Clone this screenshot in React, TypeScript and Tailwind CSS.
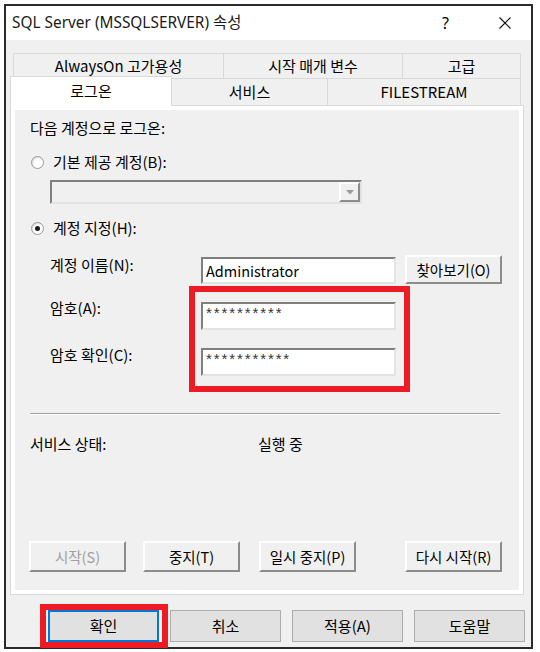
import React from "react";

const sunken =
  "border-2 border-t-[#7f7f7f] border-l-[#7f7f7f] border-r-[#e3e3e3] border-b-[#e3e3e3]";
const raised =
  "border-2 border-t-[#fdfdfd] border-l-[#fdfdfd] border-r-[#8c8c8c] border-b-[#8c8c8c] bg-[#f0f0f0]";

function Radio({ checked }: { checked?: boolean }) {
  return (
    <div className="w-[13px] h-[13px] rounded-full border border-[#9a9a9a] bg-white flex items-center justify-center shadow-[inset_1px_1px_1px_rgba(0,0,0,0.15)]">
      {checked && <div className="w-[5px] h-[5px] rounded-full bg-[#1a1a1a]" />}
    </div>
  );
}

function SvcButton({ label, disabled, className }: { label: string; disabled?: boolean; className?: string }) {
  return (
    <div
      className={`${raised} h-[31px] w-[97px] flex items-center justify-center text-[14.5px] ${
        disabled ? "text-[#a0a0a0]" : "text-black"
      } ${className ?? ""}`}
    >
      {label}
    </div>
  );
}

function BottomButton({ label, primary }: { label: string; primary?: boolean }) {
  return (
    <div
      className={`h-[32px] w-[111px] flex items-center justify-center bg-[#e1e1e1] text-[15px] ${
        primary ? "border-2 border-[#0078d7]" : "border border-[#adadad]"
      }`}
    >
      {label}
    </div>
  );
}

export default function App() {
  return (
    <div className="w-[540px] h-[652px] bg-white pt-[4px] pl-[4px] font-['Noto_Sans_CJK_KR','Noto_Sans',sans-serif] text-black">
      <div className="w-[529px] h-[645px] border-2 border-[#2b2b2b] bg-[#f0f0f0] flex flex-col">
        {/* title bar */}
        <div className="h-[34px] bg-white flex items-center shrink-0">
          <div className="ml-[6px] text-[15.4px] font-['Noto_Sans','Noto_Sans_CJK_KR',sans-serif] leading-none text-[#1a1a1a]">
            SQL Server (MSSQLSERVER) 속성
          </div>
          <div className="ml-auto mr-[50px] text-[16px] font-['Noto_Sans',sans-serif] leading-none">?</div>
          <svg width="12" height="12" viewBox="0 0 12 12" className="mr-[20px]">
            <path d="M0.5 0.5 L11.5 11.5 M11.5 0.5 L0.5 11.5" stroke="#111" strokeWidth="1.1" fill="none" />
          </svg>
        </div>

        {/* tabs */}
        <div className="mt-[13px] flex flex-col text-[15px]">
          <div className="flex ml-[7px] h-[25px]">
            <div className="w-[210px] border-t border-l border-[#d9d9d9] flex items-center justify-center">
              AlwaysOn 고가용성
            </div>
            <div className="w-[179px] border-t border-l border-[#d9d9d9] flex items-center justify-center">
              시작 매개 변수
            </div>
            <div className="w-[119px] border-t border-l border-r border-[#d9d9d9] flex items-center justify-center">
              고급
            </div>
          </div>
          <div className="flex ml-[4px] h-[27px] items-end">
            <div className="relative z-10 w-[162px] h-[30px] -mb-[1px] bg-white border-t border-l border-r border-[#d9d9d9] flex items-center justify-center pb-[1px]">
              로그온
            </div>
            <div className="w-[155px] h-[27px] border-t border-[#d9d9d9] flex items-center justify-center">
              서비스
            </div>
            <div className="w-[194px] h-[27px] border-t border-l border-r border-[#d9d9d9] flex items-center justify-center">
              FILESTREAM
            </div>
          </div>
        </div>

        {/* panel */}
        <div className="ml-[4px] w-[514px] h-[490px] border border-[#d9d9d9] bg-white p-[4px] shrink-0">
          <div className="relative h-full bg-[#f0f0f0] flex flex-col pl-[15px] pt-[8px] text-[15px]">
            <div className="h-[20px] leading-[20px]">다음 계정으로 로그온:</div>

            <div className="mt-[14px] h-[20px] flex items-center">
              <div className="ml-[1px]">
                <Radio />
              </div>
              <div className="ml-[9px] leading-[20px]">기본 제공 계정(B):</div>
            </div>

            <div className={`mt-[8px] ml-[20px] w-[312px] h-[24px] ${sunken} bg-[#f0f0f0] flex justify-end`}>
              <div className={`w-[21px] h-[20px] ${raised} flex items-center justify-center`}>
                <svg width="8" height="5" viewBox="0 0 8 5">
                  <path d="M0 0 L8 0 L4 4.5 Z" fill="#9a9a9a" />
                </svg>
              </div>
            </div>

            <div className="mt-[14px] h-[20px] flex items-center">
              <div className="ml-[1px]">
                <Radio checked />
              </div>
              <div className="ml-[9px] leading-[20px]">계정 지정(H):</div>
            </div>

            <div className="mt-[17px] flex items-start">
              <div className="ml-[20px] w-[151px] h-[20px] leading-[20px]">계정 이름(N):</div>
              <div className={`mt-[2px] w-[195px] h-[27px] ${sunken} bg-white flex items-center pl-[3px] text-[14.5px]`}>
                Administrator
              </div>
              <div className={`ml-[9px] w-[97px] h-[29px] ${raised} flex items-center justify-center text-[14.5px]`}>
                찾아보기(O)
              </div>
            </div>

            <div className="mt-[14px] flex items-start">
              <div className="ml-[20px] w-[151px] h-[20px] leading-[20px]">암호(A):</div>
              <div className={`mt-[4px] w-[195px] h-[28px] ${sunken} bg-white flex items-start pl-[3px] text-[15px] leading-[18px] font-['Liberation_Sans',sans-serif] tracking-[1.9px] text-[#333]`}>
                **********
              </div>
            </div>

            <div className="mt-[15px] flex items-start">
              <div className="ml-[20px] w-[151px] h-[20px] leading-[20px]">암호 확인(C):</div>
              <div className={`mt-[3px] w-[195px] h-[28px] ${sunken} bg-white flex items-start pl-[3px] text-[15px] leading-[18px] font-['Liberation_Sans',sans-serif] tracking-[1.9px] text-[#333]`}>
                ***********
              </div>
            </div>

            <div className="mt-[37px] w-[470px] h-[2px] border-t border-[#a0a0a0] border-b border-b-white" />

            <div className="mt-[19px] h-[20px] flex leading-[20px]">
              <div className="w-[228px]">서비스 상태:</div>
              <div>실행 중</div>
            </div>

            <div className="mt-[87px] flex">
              <SvcButton label="시작(S)" disabled className="-ml-[1px]" />
              <SvcButton label="중지(T)" className="ml-[17px]" />
              <SvcButton label="일시 중지(P)" className="ml-[19px]" />
              <SvcButton label="다시 시작(R)" className="ml-[49px]" />
            </div>

            {/* red highlight over password fields */}
            <div className="absolute left-[174px] top-[176px] w-[221px] h-[106px] border-[6px] border-[#ed1c24]" />
          </div>
        </div>

        {/* bottom buttons */}
        <div className="mt-[15px] ml-[42px] flex gap-[11px]">
          <div className="relative">
            <BottomButton label="확인" primary />
            <div className="absolute -left-[8px] -top-[6px] -right-[9px] -bottom-[6px] border-[6px] border-[#ed1c24]" />
          </div>
          <BottomButton label="취소" />
          <BottomButton label="적용(A)" />
          <BottomButton label="도움말" />
        </div>
      </div>
    </div>
  );
}
